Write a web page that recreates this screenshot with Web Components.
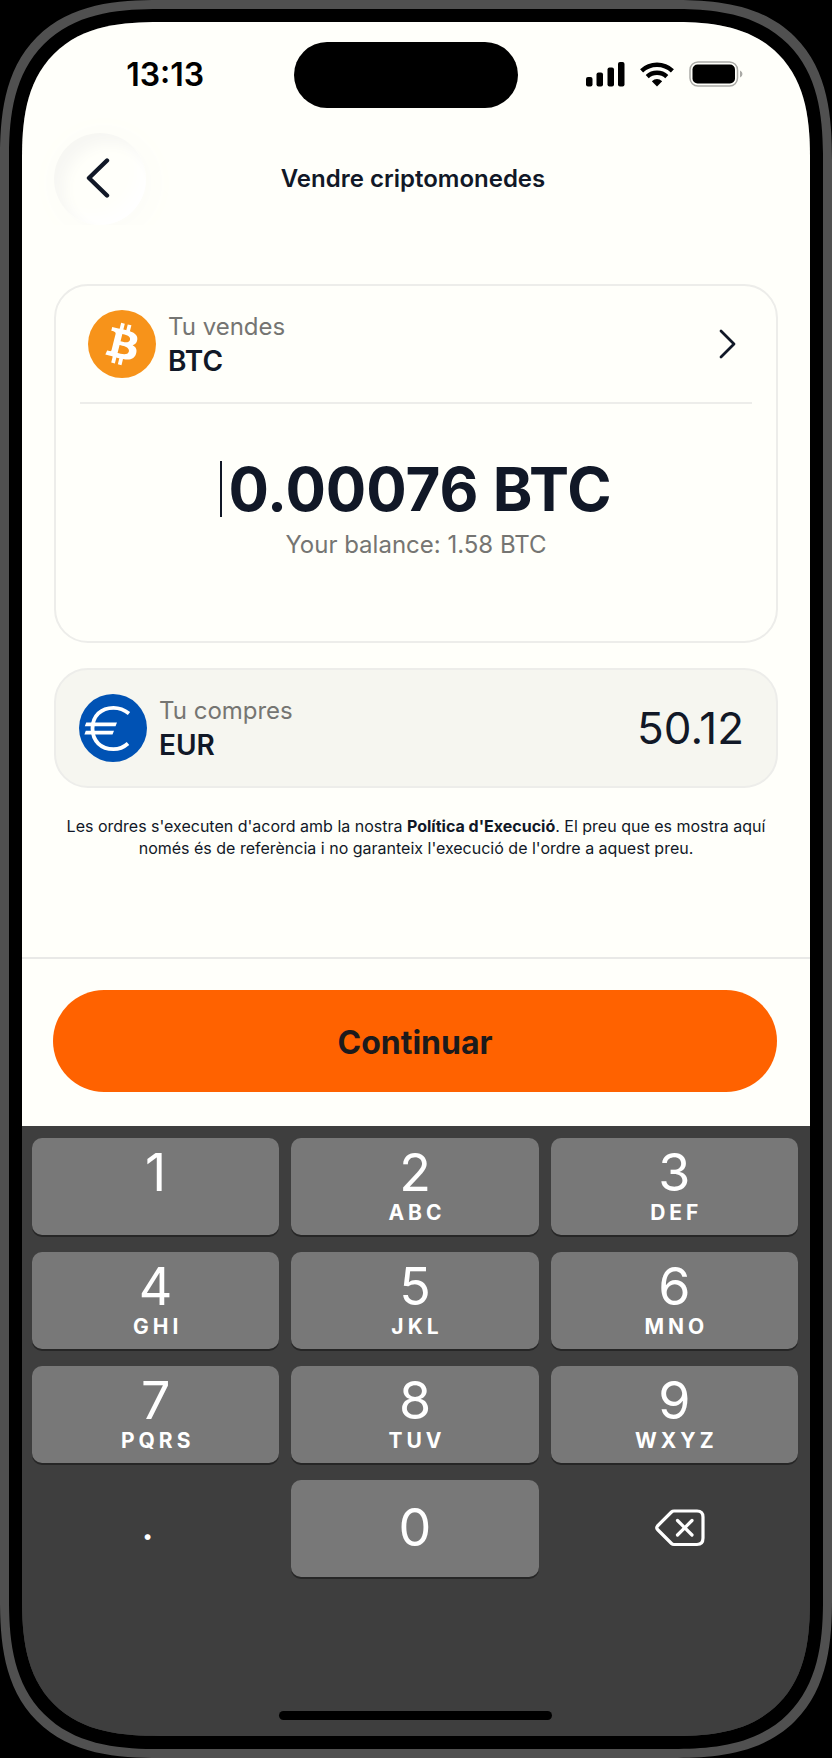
<!DOCTYPE html>
<html lang="ca">
<head>
<meta charset="utf-8">
<meta name="viewport" content="width=device-width, initial-scale=1">
<title>Vendre criptomonedes</title>
<style>
  :root {
    --paper: #fffffa;
    --ink: #111827;
    --muted: #757572;
    --line: #ededea;
    --accent: #ff6200;
    --text-note: 16px;
    --text-label: 24px;
    --text-code: 28px;
  }
  body { margin: 0; background: #000; color: var(--ink); font-family: Inter, "Liberation Sans", sans-serif; }
</style>
</head>
<body>
<phone-frame>
  <status-bar time="13:13"></status-bar>
  <screen-header>Vendre criptomonedes</screen-header>
  <trade-form>
    <sell-card label="Tu vendes" code="BTC" amount="0.00076 BTC">
      <coin-icon slot="icon" coin="btc"></coin-icon>
      Your balance: 1.58 BTC
    </sell-card>
    <buy-card label="Tu compres" code="EUR" amount="50.12">
      <coin-icon slot="icon" coin="eur"></coin-icon>
    </buy-card>
    <legal-note></legal-note>
  </trade-form>
  <action-bar>Continuar</action-bar>
  <number-pad></number-pad>
</phone-frame>

<script>
const define = (name, render) => customElements.define(name, class extends HTMLElement {
  connectedCallback() {
    if (this.shadowRoot) return;
    this.attachShadow({ mode: 'open' }).innerHTML =
      '<style>:host,*{box-sizing:border-box}button{font:inherit;color:inherit;border:0;padding:0;margin:0;background:none;cursor:pointer}svg{display:block}</style>' + render(this);
  }
});

define('phone-frame', () => `
  <style>
    :host { display: block; }
    .shell { min-height: 100vh; display: flex; border: 9px solid #505050; border-radius: 128px; padding: 13px; background: #000; }
    .screen { flex: 1; min-width: 0; display: flex; flex-direction: column; overflow: hidden; border-radius: 104px; background: #3e3e3e; }
    @supports (corner-shape: squircle) {
      .shell { border-radius: 160px; corner-shape: superellipse(1.4); }
      .screen { border-radius: 138px; corner-shape: superellipse(1.4); }
    }
  </style>
  <div class="shell"><div class="screen"><slot></slot></div></div>`);

define('status-bar', el => `
  <style>
    :host { display: grid; grid-template-columns: 14fr 224px 15fr; padding-top: 20px; background: var(--paper); color: #000; }
    .time, .icons { height: 64px; display: flex; align-items: center; justify-content: center; }
    .time { padding-left: 14px; font-size: 32px; font-weight: 600; }
    .icons { gap: 15px; }
    .island { height: 66px; border-radius: 33px; background: #000; }
  </style>
  <div class="time">${el.getAttribute('time')}</div>
  <div class="island"></div>
  <div class="icons">
    <svg width="39" height="25" viewBox="0 0 39 25" aria-hidden="true">
      <rect y="15" width="6.5" height="9.5" rx="2"/><rect x="10.5" y="10.5" width="6.5" height="14" rx="2"/><rect x="21.5" y="5.5" width="6.5" height="19" rx="2"/><rect x="32" y="0" width="6.5" height="24.5" rx="2"/>
    </svg>
    <svg width="34" height="25" viewBox="0 0 34 25" fill="none" stroke="#000" stroke-width="4.4" aria-hidden="true">
      <path d="M1.6 8.8A22.5 22.5 0 0 1 32.4 8.8"/><path d="M7.2 14.6A14.3 14.3 0 0 1 26.8 14.6"/>
      <path d="M17 24.5L11.8 19.2Q17 14.800 22.2 19.2Z" fill="#000" stroke="none"/>
    </svg>
    <svg width="54" height="26" viewBox="0 0 54 26" aria-hidden="true">
      <rect x="1" y="1" width="47.500" height="24" rx="8" fill="none" stroke="#aaaaa6" stroke-width="1.5"/>
      <rect x="3.500" y="3.500" width="42.500" height="19" rx="5" fill="#000"/>
      <path d="M51 9.500Q53.500 10.500 53.500 13T51 16.500Z" fill="#aaaaa6"/>
    </svg>
  </div>`);

define('screen-header', () => `
  <style>
    :host { display: grid; grid-template-columns: 1fr auto 1fr; align-items: center; padding: 25px 38px 0 32px; background: var(--paper); }
    button { width: 92px; height: 92px; border-radius: 50%; display: grid; place-items: center; padding: 0 4px 2px 0;
      box-shadow: inset 10px 10px 14px #f7f7f3, inset -8px -8px 16px #fff, 4px 4px 36px #fbfbf7; }
    h1 { margin: 0; font-size: var(--text-label); font-weight: 600; line-height: 32px; }
  </style>
  <button type="button" aria-label="Enrere">
    <svg width="24" height="40" viewBox="0 0 24 40" fill="none" stroke="#111827" stroke-width="4.4" stroke-linecap="round" stroke-linejoin="round"><path d="M21 2.5L3 20L21 37.5"/></svg>
  </button>
  <h1><slot></slot></h1>`);

define('trade-form', () => `
  <style>
    :host { flex: 1 0 auto; display: flex; flex-direction: column; gap: 25px; padding: 59px 32px 24px; background: var(--paper); }
  </style>
  <slot></slot>`);

define('coin-icon', el => `
  <style>:host { display: block; flex: none; } svg { width: 68px; height: 68px; }</style>
  ${el.getAttribute('coin') === 'btc' ? `
  <svg viewBox="0 0 32 32" aria-hidden="true"><circle cx="16" cy="16" r="16" fill="#f7931a"/><path fill="#fff" d="M23.189 14.02c.314-2.096-1.283-3.223-3.465-3.975l.708-2.84-1.728-.43-.69 2.765c-.454-.114-.92-.22-1.385-.326l.695-2.783L15.596 6l-.708 2.839c-.376-.086-.746-.17-1.104-.26l.002-.009-2.384-.595-.46 1.846s1.283.294 1.256.312c.7.175.826.638.805 1.006l-.806 3.235c.048.012.11.03.18.057l-.183-.045-1.13 4.532c-.086.212-.303.531-.793.41.018.025-1.256-.313-1.256-.313l-.858 1.978 2.25.561c.418.105.828.215 1.231.318l-.715 2.872 1.727.43.708-2.84c.472.127.93.245 1.378.357l-.706 2.828 1.728.43.715-2.866c2.948.558 5.164.333 6.097-2.333.752-2.146-.037-3.385-1.588-4.192 1.13-.26 1.98-1.003 2.207-2.538zm-3.95 5.538c-.533 2.147-4.148.986-5.32.695l.95-3.805c1.172.293 4.929.872 4.37 3.11zm.535-5.569c-.487 1.953-3.495.96-4.47.717l.86-3.45c.975.243 4.118.696 3.61 2.733z"/></svg>` : `
  <svg viewBox="0 0 68 68" aria-hidden="true"><circle cx="34" cy="34" r="34" fill="#0052b4"/><path d="M50 19.5C45 15.500 40 13.800 34.5 13.800C22 13.800 13.500 22 13.500 34.500S22 55.200 34.500 55.200C40 55.200 45 53 49 49.500" fill="none" stroke="#fff" stroke-width="3.8"/><path fill="#fff" d="M7.2 28.5H38L36.5 32.2H5.8ZM6.8 36.8H35L33.5 40.5H5.4Z"/></svg>`}`);

define('coin-label', el => `
  <style>
    :host { display: block; flex: 1; text-align: left; line-height: 34px; }
    span { display: block; font-size: var(--text-label); color: var(--muted); }
    b { display: block; font-size: var(--text-code); font-weight: 600; }
  </style>
  <span>${el.getAttribute('label')}</span><b>${el.getAttribute('code')}</b>`);

define('sell-card', el => `
  <style>
    :host { display: block; border: 2px solid var(--line); border-radius: 34px; padding: 0 24px 80px; }
    .coin { display: flex; align-items: center; gap: 12px; width: 100%; height: 118px; padding: 0 16px 0 8px; border-bottom: 2px solid var(--line); }
    .amount { display: flex; justify-content: center; align-items: center; gap: 6px; padding: 49px 0 4px; }
    .caret { width: 2px; height: 56px; background: #111827; }
    input { field-sizing: content; min-width: 0; height: 72px; border: 0; padding: 0; outline: 0; background: none; color: inherit; font: 700 60px/72px Inter, "Liberation Sans", sans-serif; }
    p { margin: 0; text-align: center; font-size: var(--text-label); line-height: 32px; color: var(--muted); }
  </style>
  <button class="coin" type="button">
    <slot name="icon"></slot>
    <coin-label label="${el.getAttribute('label')}" code="${el.getAttribute('code')}"></coin-label>
    <svg width="17" height="30" viewBox="0 0 17 30" fill="none" stroke="#111827" stroke-width="2.8" stroke-linecap="round" stroke-linejoin="round" aria-hidden="true"><path d="M2 2L15 15L2 28"/></svg>
  </button>
  <div class="amount"><span class="caret"></span><input type="text" inputmode="decimal" aria-label="Import" value="${el.getAttribute('amount')}"></div>
  <p><slot></slot></p>`);

define('buy-card', el => `
  <style>
    :host { display: flex; align-items: center; gap: 12px; height: 120px; border: 2px solid var(--line); border-radius: 34px; padding: 0 32px 0 23px; background: #f6f6f0; }
    output { font-size: 44px; line-height: 56px; }
  </style>
  <slot name="icon"></slot>
  <coin-label label="${el.getAttribute('label')}" code="${el.getAttribute('code')}"></coin-label>
  <output>${el.getAttribute('amount')}</output>`);

define('legal-note', () => `
  <style>
    :host { display: block; padding-top: 2px; text-align: center; font-size: var(--text-note); line-height: 22px; }
    a { color: inherit; font-weight: 700; text-decoration: none; }
  </style>
  Les ordres s'executen d'acord amb la nostra <a href="#politica">Política d'Execució</a>. El preu que es mostra aquí només és de referència i no garanteix l'execució de l'ordre a aquest preu.`);

define('action-bar', () => `
  <style>
    :host { display: block; border-top: 2px solid #e9e9e7; padding: 31px 33px 34px 31px; background: var(--paper); }
    button { display: block; width: 100%; height: 102px; padding-top: 2px; border-radius: 51px; background: var(--accent); color: #1c1a1c; font-size: 32px; font-weight: 700; }
  </style>
  <button type="button"><slot></slot></button>`);

define('pad-key', el => {
  const letters = el.getAttribute('letters');
  return `
  <style>
    :host { display: block; }
    button { display: flex; flex-direction: column; align-items: center; width: 100%; height: 97px; padding: 6px 0 0; border-radius: 10px; background: #787878; box-shadow: 0 2px 0 #262626; color: #fff; }
    b { font-size: 52px; font-weight: 400; line-height: 57px; }
    small { font-size: 21px; font-weight: 700; line-height: 24px; letter-spacing: 4px; padding-left: 4px; }
    :host([kind]) button { justify-content: center; padding: 0 0 2px; }
    :host([kind="point"]) button, :host([kind="delete"]) button { background: none; box-shadow: none; }
    :host([kind="point"]) button { padding: 0 16px 8px 0; }
    :host([kind="point"]) b { font-size: 44px; }
    :host([kind="delete"]) button { padding-left: 12px; }
  </style>
  <button type="button"${el.hasAttribute('name') ? ` aria-label="${el.getAttribute('name')}"` : ''}><b><slot></slot></b>${letters ? `<small>${letters}</small>` : ''}</button>`;
});

define('number-pad', () => `
  <style>
    :host { display: block; background: #3e3e3e; padding: 12px 12px 16px 10px; }
    .keys { display: grid; grid-template-columns: repeat(3, 1fr); gap: 17px 12px; }
    .home { width: 273px; height: 9px; border-radius: 5px; margin: 134px auto 0; background: #000; }
  </style>
  <div class="keys">
    <pad-key>1</pad-key>
    ${['ABC', 'DEF', 'GHI', 'JKL', 'MNO', 'PQRS', 'TUV', 'WXYZ'].map((l, i) => `<pad-key letters="${l}">${i + 2}</pad-key>`).join('')}
    <pad-key kind="point">.</pad-key>
    <pad-key kind="zero">0</pad-key>
    <pad-key kind="delete" name="Esborra"><svg width="50" height="38" viewBox="0 0 50 38" fill="none" stroke="#fff" stroke-width="3.2" stroke-linecap="round" stroke-linejoin="round"><path d="M19 2H42Q48 2 48 8V29Q48 35.5 42 35.5H19Q17.5 35.5 16.5 34.5L2.5 20.5Q1 18.8 2.5 17L16.500 3Q17.500 2 19 2Z"/><path d="M22.5 11.5L37 26M37 11.5L22.5 26"/></svg></pad-key>
  </div>
  <div class="home"></div>`);
</script>
</body>
</html>
